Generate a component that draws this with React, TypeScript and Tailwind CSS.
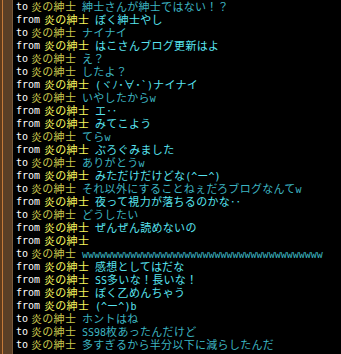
const LINES: [string, string][] = [
  ["to", "紳士さんが紳士ではない！？"],
  ["from", "ぼく紳士やし"],
  ["to", "ナイナイ"],
  ["from", "はこさんブログ更新はよ"],
  ["to", "え？"],
  ["to", "したよ？"],
  ["from", "(ヾﾉ･∀･`)ナイナイ"],
  ["to", "いやしたからw"],
  ["from", "エ‥"],
  ["from", "みてこよう"],
  ["to", "てらw"],
  ["from", "ぶろぐみました"],
  ["to", "ありがとうw"],
  ["from", "みただけだけどな(^ー^)"],
  ["to", "それ以外にすることねぇだろブログなんてw"],
  ["from", "夜って視力が落ちるのかな‥"],
  ["to", "どうしたい"],
  ["from", "ぜんぜん読めないの"],
  ["from", ""],
  ["to", "wwwwwwwwwwwwwwwwwwwwwwwwwwwwwwwwwwwwwwww"],
  ["from", "感想としてはだな"],
  ["from", "SS多いな！長いな！"],
  ["from", "ぼく乙めんちゃう"],
  ["from", "(^ー^)b"],
  ["to", "ホントはね"],
  ["to", "SS98枚あったんだけど"],
  ["to", "多すぎるから半分以下に減らしたんだ"],
]

// split ascii runs so they get the narrow mono face
function Msg({ text }: { text: string }) {
  const parts = text.match(/[\x20-\x7e]+|[^\x20-\x7e]+/g) || []
  return (
    <>
      {parts.map((p, i) =>
        /^[\x20-\x7e]+$/.test(p) ? (
          <span key={i} className="font-['DejaVu_Sans_Mono',monospace] text-[10px] tracking-normal">
            {p}
          </span>
        ) : (
          <span key={i}>{p}</span>
        )
      )}
    </>
  )
}

export default function App() {
  return (
    <div className="flex h-[354px] w-[341px] overflow-hidden bg-black">
      <div className="w-[2px] bg-[#5e3b1c]" />
      <div className="w-[1px] bg-[#c47a3a]" />
      <div className="w-[9px] bg-[#5a3f26]" />
      <div className="w-[1px] bg-[#7a5a3c]" />
      <div className="flex flex-1 flex-col pl-[3px] font-['Noto_Sans_CJK_JP',sans-serif] text-[11px] leading-[13px] tracking-[0.3px]">
        {LINES.map(([dir, msg], i) => {
          const to = dir === "to"
          return (
            <div key={i} className="flex h-[13px] items-center whitespace-nowrap">
              <span
                className={
                  "font-['DejaVu_Sans_Mono',monospace] text-[10px] tracking-normal text-white " +
                  (to ? "w-[15px]" : "w-[28px]")
                }
              >
                {dir}
              </span>
              <span className={"w-[51px] " + (to ? "text-[#c8c64c]" : "text-[#f6f45c]")}>炎の紳士</span>
              <span className={to ? "text-[#3cb4c0]" : "text-[#58e4f0]"}>
                <Msg text={msg} />
              </span>
            </div>
          )
        })}
      </div>
    </div>
  )
}
